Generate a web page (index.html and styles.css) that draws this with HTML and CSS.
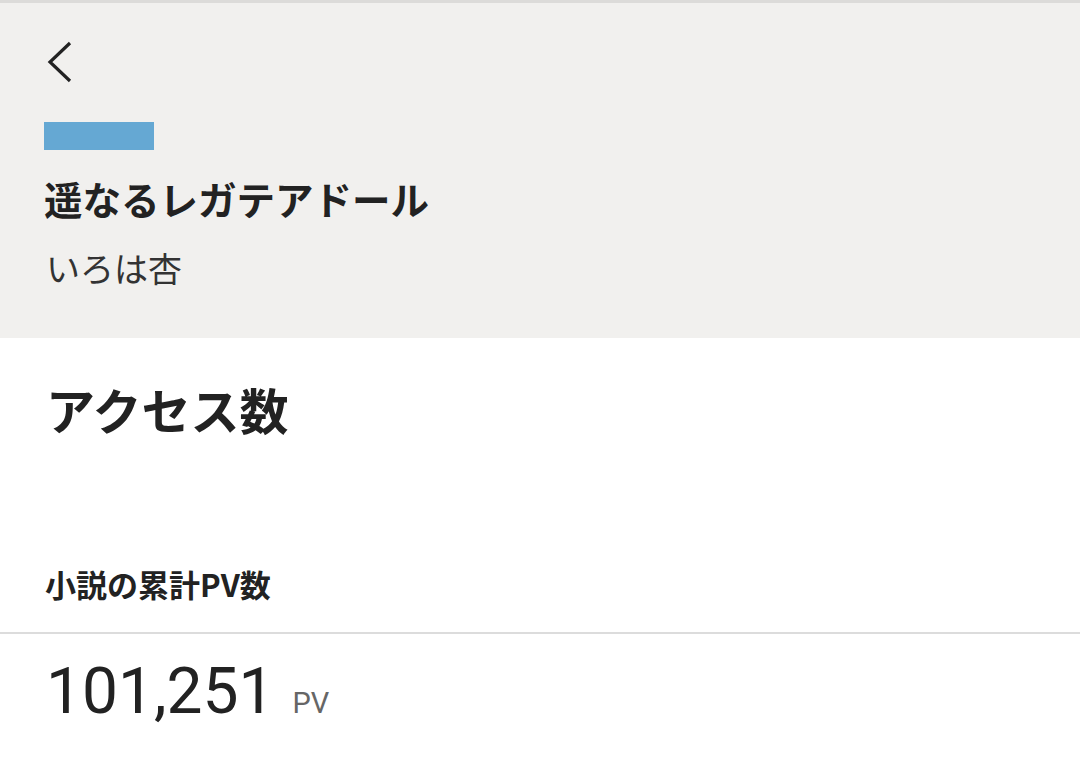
FILE: index.html
```html
<!DOCTYPE html>
<html lang="ja">
<head>
<meta charset="utf-8">
<link rel="stylesheet" href="styles.css">
</head>
<body>
<header class="header">
  <button class="back" aria-label="戻る">
    <svg width="40" height="48" viewBox="0 0 40 48"><polyline points="26,5 6,24 26,43" fill="none" stroke="#222" stroke-width="3.2"/></svg>
  </button>
  <div class="tag"></div>
  <h1 class="title">遥なるレガテアドール</h1>
  <p class="author">いろは杏</p>
</header>
<main class="main">
  <h2 class="section-title">アクセス数</h2>
  <h3 class="label">小説の累計PV数</h3>
  <div class="divider"></div>
  <div class="value"><span class="num">101,251</span><span class="unit">PV</span></div>
</main>
</body>
</html>
```
FILE: styles.css
```css
html, body {
  margin: 0;
  padding: 0;
  background: #fff;
}
body {
  font-family: "Noto Sans CJK JP", "Noto Sans", sans-serif;
  color: #222;
  width: 1080px;
  height: 783px;
  overflow: hidden;
}
.header {
  background: #f1f0ee;
  border-top: 3px solid #dcdbd9;
  height: 338px;
  box-sizing: border-box;
  padding: 35px 44px 0;
  display: flex;
  flex-direction: column;
  align-items: flex-start;
}
.back {
  border: 0;
  background: none;
  padding: 0;
  margin: 0;
  width: 40px;
  height: 48px;
  display: block;
}
.back svg { display: block; }
.tag {
  width: 110px;
  height: 28px;
  background: #65a8d3;
  margin-top: 36px;
}
.title {
  margin: 20px 0 0;
  font-size: 38.5px;
  font-weight: 700;
  line-height: 56px;
  letter-spacing: 0;
}
.author {
  margin: 17px 0 0 2px;
  font-size: 34px;
  font-weight: 400;
  line-height: 50px;
  color: #333;
}
.main {
  display: flex;
  flex-direction: column;
}
.section-title {
  margin: 36px 0 0 46px;
  font-size: 49px;
  font-weight: 700;
  line-height: 70px;
}
.label {
  margin: 118px 0 0 45px;
  font-size: 31px;
  font-weight: 700;
  line-height: 44px;
}
.divider {
  height: 2px;
  background: #dcdcdc;
  margin-top: 26px;
}
.value {
  margin: 18px 0 0 46px;
  display: flex;
  align-items: baseline;
  font-family: Roboto, "Noto Sans", sans-serif;
}
.num {
  font-size: 64px;
  line-height: 80px;
  font-weight: 400;
  color: #222;
}
.unit {
  font-size: 29px;
  color: #666;
  margin-left: 18px;
}
```
